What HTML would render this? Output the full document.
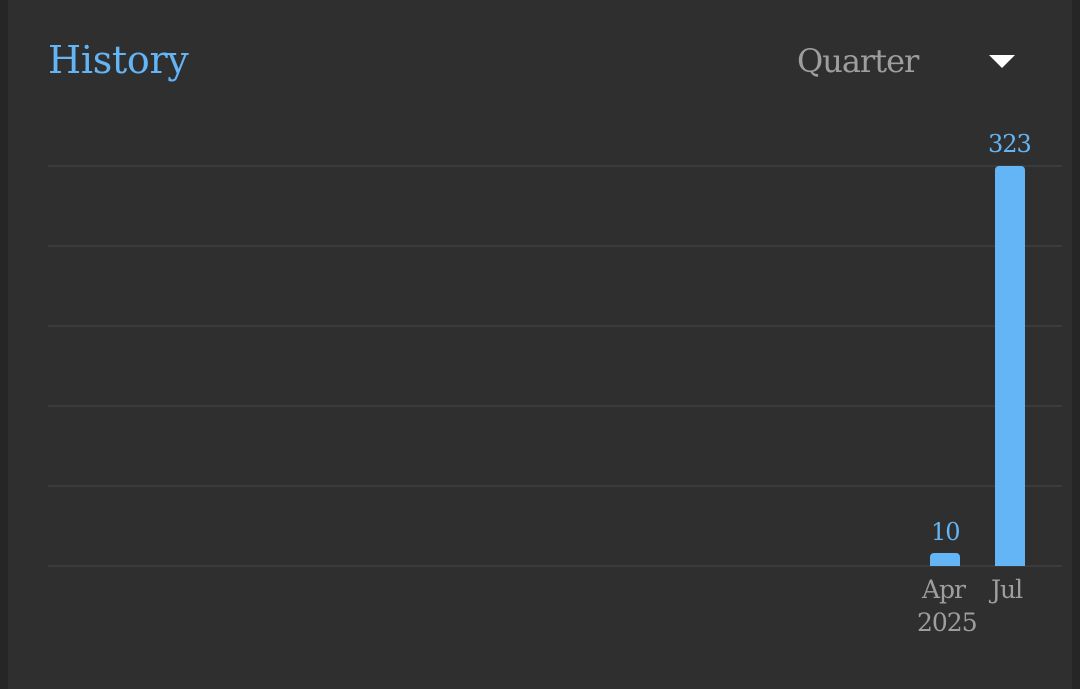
<!DOCTYPE html>
<html><head><style>
body{margin:0;width:1080px;height:689px;background:#2f2f2f;position:relative;overflow:hidden;font-family:"DejaVu Serif","Liberation Serif",serif}
.l{position:absolute;left:0;top:0;width:8px;height:689px;background:#262626}
.r{position:absolute;right:0;top:0;width:8px;height:689px;background:#262626}
.g{position:absolute;left:48px;width:1014px;height:2px;background:#3b3b3b}
.t{position:absolute;white-space:nowrap}
.b{position:absolute;background:#64b5f6;border-radius:4px 4px 0 0}
</style></head><body>
<div class="l"></div><div class="r"></div>
<div class="t" style="left:48px;top:38px;font-size:38px;color:#64b5f6;letter-spacing:-0.3px">History</div>
<div class="t" style="left:797px;top:42px;font-size:32px;color:#9e9e9e;letter-spacing:-1px">Quarter</div>
<svg class="t" style="left:989px;top:55px" width="26" height="14"><polygon points="0,0 26,0 13,13" fill="#fff"/></svg>
<div class="g" style="top:165px"></div><div class="g" style="top:245px"></div><div class="g" style="top:325px"></div><div class="g" style="top:405px"></div><div class="g" style="top:485px"></div><div class="g" style="top:565px"></div>
<div class="b" style="left:930px;top:553px;width:30px;height:13px"></div>
<div class="b" style="left:995px;top:166px;width:30px;height:400px"></div>
<div class="t" style="left:931px;top:518px;font-size:24px;color:#64b5f6;letter-spacing:-1px">10</div>
<div class="t" style="left:988px;top:130px;font-size:24px;color:#64b5f6;letter-spacing:-1px">323</div>
<div class="t" style="left:922px;top:575px;font-size:25px;color:#9e9e9e;letter-spacing:-1px">Apr</div>
<div class="t" style="left:917px;top:608px;font-size:25px;color:#9e9e9e;letter-spacing:-1px">2025</div>
<div class="t" style="left:991px;top:575px;font-size:25px;color:#9e9e9e;letter-spacing:-1px">Jul</div>
</body></html>
